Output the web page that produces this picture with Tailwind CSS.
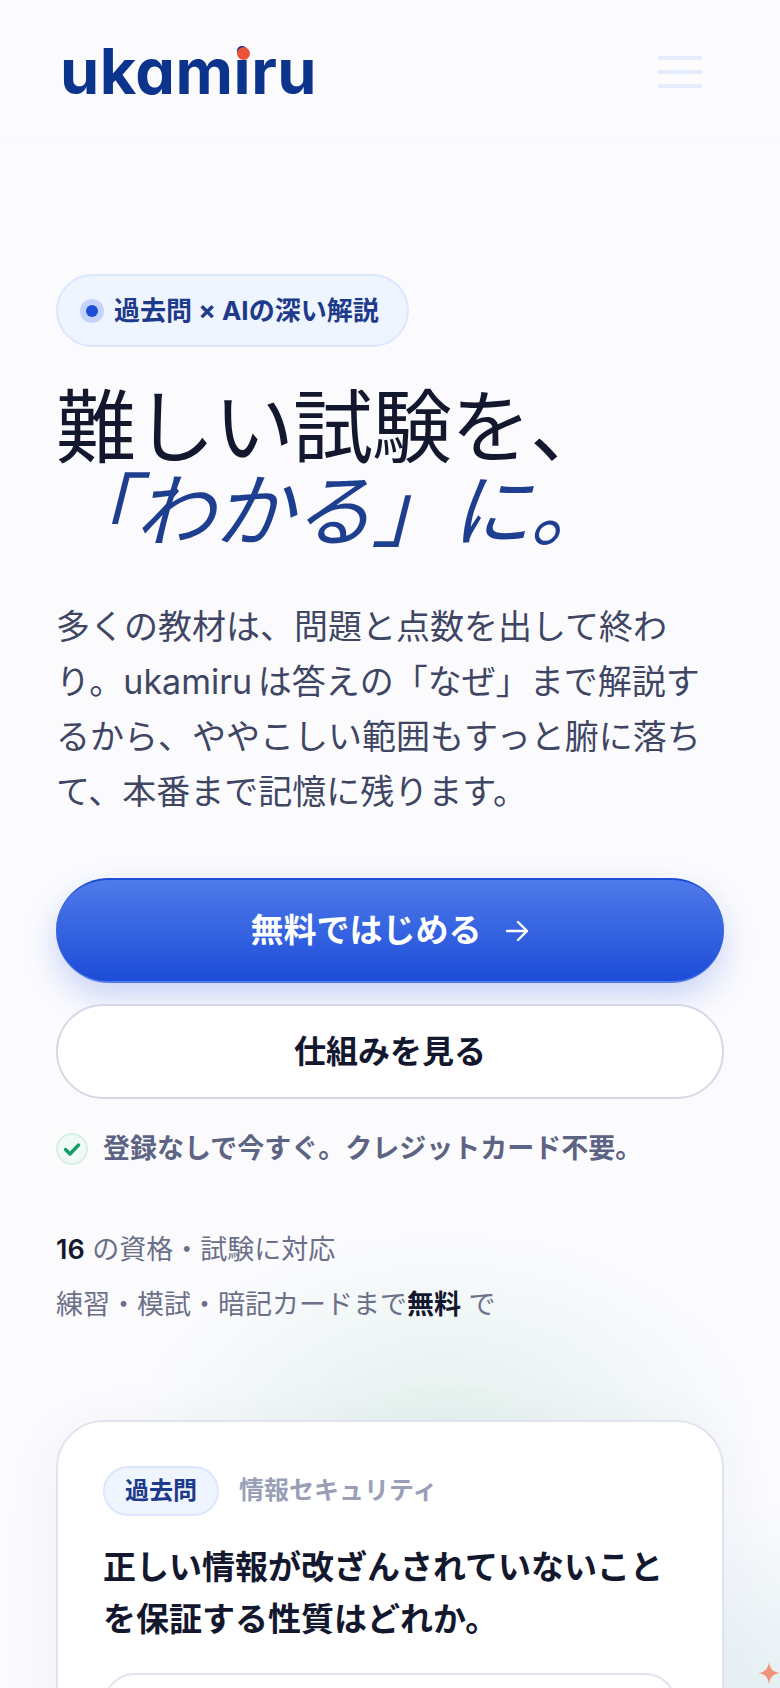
<!doctype html>
<html lang="ja">
<head>
<meta charset="utf-8">
<title>ukamiru</title>
<script src="https://cdn.jsdelivr.net/npm/@tailwindcss/browser@4"></script>
</head>
<body class="bg-[#fbfbfe]">
<div class="relative h-[1688px] w-[780px] overflow-hidden bg-[#fbfbfe] font-['Inter','Noto_Sans_CJK_JP',sans-serif] text-[#14182e]">
  <!-- background glows -->
  <div class="absolute left-[130px] top-[1230px] h-[420px] w-[630px] rounded-full bg-[radial-gradient(closest-side,#e2f0ec,#e2f0ec00)]"></div>
  <div class="absolute left-[600px] top-[1500px] h-[400px] w-[360px] rounded-full bg-[radial-gradient(closest-side,#e3eff2,#e3eff200)]"></div>

  <div class="relative">
    <header class="flex h-[141px] items-start justify-between border-b border-[#f9f9fd] pl-[60px] pr-[78px]">
      <div class='relative mt-[33px] text-[63px] leading-[76px] font-bold tracking-[0.5px] text-[#0d348c] [font-feature-settings:"cv11"]'>
        ukamiru
        <span class="absolute left-[177px] top-[14px] h-[13px] w-[13px] rounded-full bg-[#e8533a]"></span>
      </div>
      <div class="mt-[56px] flex flex-col gap-[10px]">
        <span class="h-[4px] w-[44px] bg-[#e6ecfd]"></span>
        <span class="h-[4px] w-[44px] bg-[#e6ecfd]"></span>
        <span class="h-[4px] w-[44px] bg-[#e6ecfd]"></span>
      </div>
    </header>

    <main class="px-[56px]">
      <div class="mt-[133px] inline-flex h-[73px] items-center gap-[10px] rounded-full border-2 border-[#dce6fd] bg-[#eff5ff] pl-[22px] pr-[28px] text-[26px] font-bold text-[#1e3a8a]">
        <span class="flex h-[24px] w-[24px] items-center justify-center rounded-full bg-[#c3d3f9]">
          <span class="h-[12px] w-[12px] rounded-full bg-[#1d4ed8]"></span>
        </span>
        <span>過去問 × AIの深い解説</span>
      </div>

      <h1 class="mt-[38px] text-[80px] leading-[84px] font-normal tracking-[-1px]">
        難しい試験を、<br>
        <em class="font-normal text-[#1e3f8f]">「わかる」に。</em>
      </h1>

      <p class="mt-[46px] w-[668px] text-[34px] leading-[55px] text-[#3f4663] [word-spacing:-4px]">多くの教材は、問題と点数を出して終わり。ukamiru は答えの「なぜ」まで解説するから、ややこしい範囲もすっと腑に落ちて、本番まで記憶に残ります。</p>

      <a class="mt-[59px] flex h-[105px] items-center justify-center gap-[22px] rounded-full border-y-2 border-t-[#1d4ed8] border-b-[#4f7aea] bg-gradient-to-b from-[#4f7aea] to-[#1c4bd8] text-[33px] font-bold text-white shadow-[0_14px_32px_rgba(29,78,216,0.22)]">
        無料ではじめる
        <svg class="h-[26px] w-[26px]" viewBox="0 0 26 26" fill="none" stroke="currentColor" stroke-width="2.4" stroke-linecap="round" stroke-linejoin="round"><path d="M3 13h20M14 4l9 9-9 9"/></svg>
      </a>
      <a class="mt-[21px] flex h-[95px] items-center justify-center rounded-full border-2 border-[#d6d8e8] bg-white text-[32px] font-bold">仕組みを見る</a>

      <div class="mt-[34px] flex items-center gap-[15px] text-[27px] leading-[32px] font-semibold text-[#5d6382]">
        <span class="flex h-[32px] w-[32px] items-center justify-center rounded-full border-2 border-[#d7f0e4] bg-[#eff9f5]">
          <svg class="h-[18px] w-[18px]" viewBox="0 0 18 18" fill="none" stroke="#0f9d68" stroke-width="3.4" stroke-linecap="round" stroke-linejoin="round"><path d="M2.500 9.500l4.500 4.500 8.500-9"/></svg>
        </span>
        登録なしで今すぐ。クレジットカード不要。
      </div>

      <div class="mt-[57px] text-[27px] leading-[55px] text-[#6b7088]">
        <p><strong class="font-semibold text-[#14182e]">16</strong> の資格・試験に対応</p>
        <p>練習・模試・暗記カードまで<strong class="font-bold text-[#14182e]">無料</strong> で</p>
      </div>

      <section class="mt-[88px] h-[400px] rounded-[48px] border-2 border-[#e2e3f1] bg-white px-[45px] pt-[44px] shadow-[0_10px_60px_rgba(40,60,110,0.05)]">
        <div class="flex items-center gap-[20px]">
          <span class="flex h-[50px] w-[116px] items-center justify-center rounded-full border-2 border-[#dce6fd] bg-[#eff5ff] text-[24px] font-bold text-[#1e3a8a]">過去問</span>
          <span class="text-[25px] font-semibold text-[#9a9fb8]">情報セキュリティ</span>
        </div>
        <h2 class="mt-[25px] text-[33px] leading-[52px] font-bold">正しい情報が改ざんされていないことを保証する性質はどれか。</h2>
        <div class="mt-[28px] h-[120px] rounded-[32px] border-2 border-[#e2e3f1] bg-white"></div>
      </section>
    </main>
  </div>

  <svg class="absolute left-[758px] top-[1662px] h-[22px] w-[22px]" viewBox="0 0 22 22" fill="#f0937a"><path d="M11 0c1 6.500 3.500 10 11 11-7.500 1-10 4.500-11 11-1-6.500-3.500-10-11-11 7.500-1 10-4.500 11-11z"/></svg>
</div>
</body>
</html>
